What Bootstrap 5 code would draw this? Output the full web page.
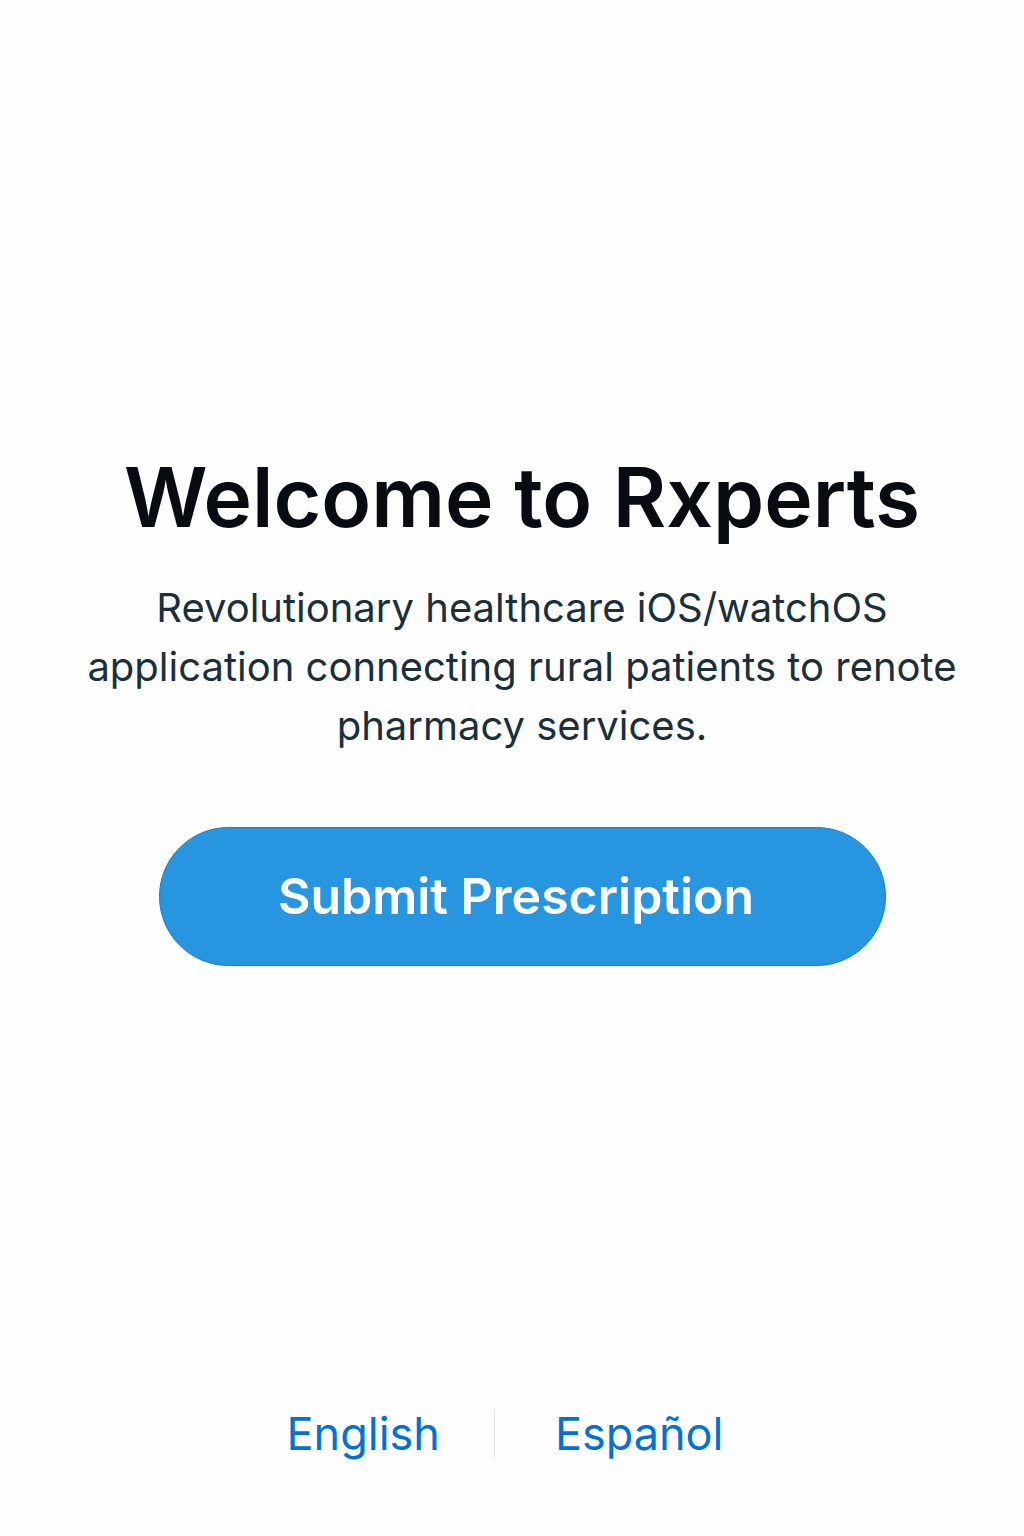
<!DOCTYPE html>
<html lang="en">
<head>
<meta charset="utf-8">
<meta name="viewport" content="width=device-width, initial-scale=1">
<title>Rxperts</title>
<link href="https://cdn.jsdelivr.net/npm/bootstrap@5.3.0/dist/css/bootstrap.min.css" rel="stylesheet">
<style>
body { font-family: Inter, "Liberation Sans", sans-serif; background: #fefefe; }
.welcome { padding: 8px 24px 0 44px; }
.hero-title { margin-bottom: 30px; font-size: 82px; line-height: 100px; font-weight: 600; color: #080c12; }
.hero-text { margin-bottom: 72px; font-size: 40px; line-height: 59px; color: #1a2f3c; }
.btn-submit {
  --bs-btn-bg: #2795e0; --bs-btn-color: #fff; --bs-btn-border-color: #0f80d4;
  --bs-btn-hover-bg: #1e87cf; --bs-btn-hover-color: #fff;
  --bs-btn-active-bg: #1a79ba; --bs-btn-active-color: #fff;
  max-width: 727px; min-height: 139px; padding-right: 24px;
  font-size: 50px; font-weight: 600;
}
.languages { padding: 0 14px 74px 0; font-size: 45px; line-height: 56px; }
.languages a { color: #0072d6; }
.divider { width: 1px; height: 50px; margin: 0 60px 0 54px; background: #e4e6e8; }
</style>
</head>
<body class="min-vh-100 d-flex flex-column">
<main class="welcome flex-grow-1 d-flex flex-column align-items-center justify-content-center text-center">
<h1 class="hero-title">Welcome to Rxperts</h1>
<p class="hero-text">Revolutionary healthcare iOS/watchOS<br>application connecting rural patients to renote<br>pharmacy services.</p>
<button type="button" class="btn btn-submit rounded-pill w-100">Submit Prescription</button>
</main>
<nav class="languages d-flex justify-content-center align-items-center" aria-label="Language">
<a href="#en" class="text-decoration-none">English</a>
<div class="divider"></div>
<a href="#es" lang="es" class="text-decoration-none">Español</a>
</nav>
<script src="https://cdn.jsdelivr.net/npm/bootstrap@5.3.0/dist/js/bootstrap.bundle.min.js"></script>
</body>
</html>
